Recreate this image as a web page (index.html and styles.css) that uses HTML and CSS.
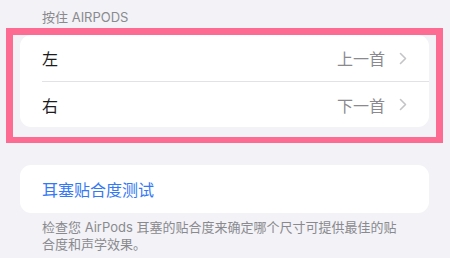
FILE: index.html
```html
<!DOCTYPE html>
<html lang="zh-CN">
<head>
    <meta charset="UTF-8">
    <meta name="viewport" content="width=device-width, initial-scale=1.0">
    <link rel="stylesheet" href="styles.css">
    <title>AirPods 设置</title>
</head>
<body>
    <div class="pagina">
        <div class="grupo">
            <h2 class="cabecera">按住 AIRPODS</h2>
            <div class="tarjeta">
                <div class="fila">
                    <div class="fila-contenido">
                        <span class="etiqueta">左</span>
                        <span class="valor">上一首</span>
                        <svg class="flecha" width="8" height="13" viewBox="0 0 8 13"><path d="M1.5 1.5 L6.5 6.5 L1.5 11.5" fill="none" stroke="#c4c4c7" stroke-width="1.6" stroke-linecap="round" stroke-linejoin="round"/></svg>
                    </div>
                </div>
                <div class="fila">
                    <div class="fila-contenido">
                        <span class="etiqueta">右</span>
                        <span class="valor">下一首</span>
                        <svg class="flecha" width="8" height="13" viewBox="0 0 8 13"><path d="M1.5 1.5 L6.5 6.5 L1.5 11.5" fill="none" stroke="#c4c4c7" stroke-width="1.6" stroke-linecap="round" stroke-linejoin="round"/></svg>
                    </div>
                </div>
            </div>
            <div class="marco"></div>
        </div>

        <div class="grupo grupo-prueba">
            <div class="tarjeta">
                <div class="fila">
                    <div class="fila-contenido">
                        <span class="enlace">耳塞贴合度测试</span>
                    </div>
                </div>
            </div>
            <p class="nota">检查您 AirPods 耳塞的贴合度来确定哪个尺寸可提供最佳的贴合度和声学效果。</p>
        </div>
    </div>
</body>
</html>
```

FILE: styles.css
```css
* {
    margin: 0;
    padding: 0;
    box-sizing: border-box;
    font-family: Inter, 'Noto Sans CJK SC', sans-serif;
}
body {
    background-color: #f2f2f7;
    width: 450px;
    height: 258px;
    overflow: hidden;
}
.pagina {
    position: relative;
    padding: 0 21px 0 20px;
}
.cabecera {
    font-size: 13px;
    font-weight: 400;
    line-height: 16px;
    color: #8a8a8e;
    padding: 9px 22px 10px;
}
.tarjeta {
    background-color: #fff;
    border-radius: 11px;
    overflow: hidden;
}
.fila {
    padding-left: 22px;
}
.fila-contenido {
    height: 46px;
    display: flex;
    align-items: center;
    padding-right: 22px;
}
.fila + .fila .fila-contenido {
    border-top: 1px solid #e2e2e6;
}
.etiqueta {
    font-size: 16px;
    color: #1c1c1e;
    flex: 1;
}
.valor {
    font-size: 16px;
    color: #8a8a8e;
    margin-right: 14px;
}
.flecha {
    display: block;
}
.marco {
    position: absolute;
    top: 28px;
    left: 6px;
    width: 437px;
    height: 115px;
    border: 7px solid #fd6b93;
    border-bottom-width: 6px;
}
.grupo-prueba {
    margin-top: 38px;
}
.grupo-prueba .fila-contenido {
    height: 48px;
}
.enlace {
    font-size: 16px;
    color: #3478f6;
}
.nota {
    font-size: 13px;
    line-height: 17px;
    color: #8a8a8e;
    padding: 6px 20px 0 22px;
}
```
